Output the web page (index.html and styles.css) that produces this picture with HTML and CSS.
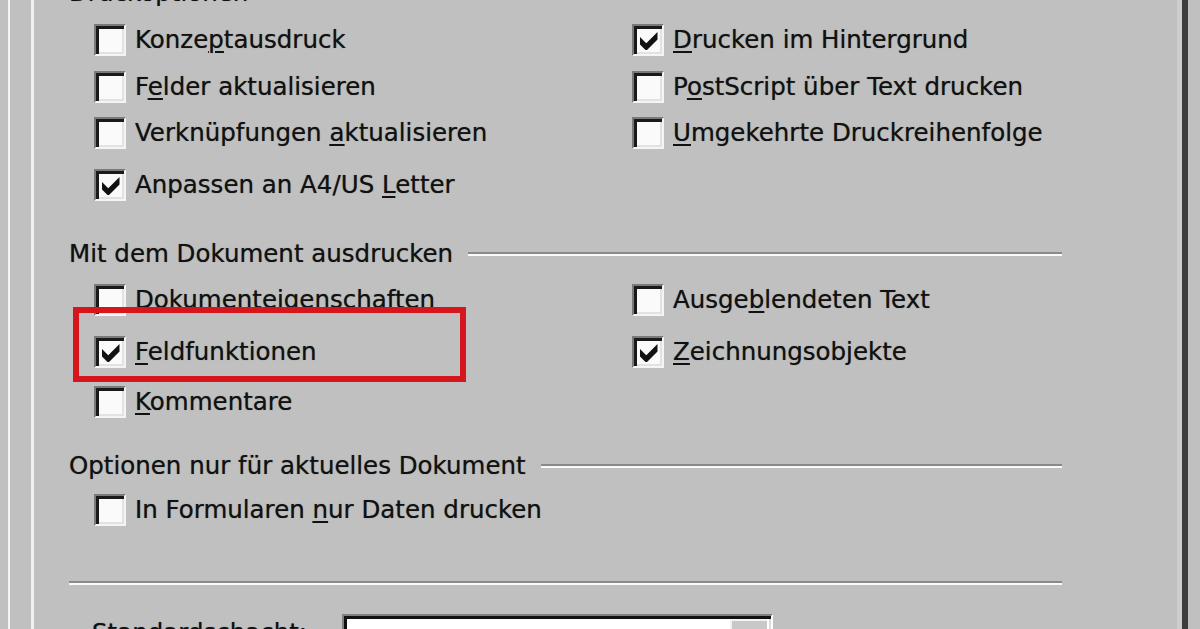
FILE: index.html
```html
<!DOCTYPE html>
<html lang="de">
<head>
<meta charset="utf-8">
<title>Drucken – Optionen</title>
<link rel="stylesheet" href="styles.css">
</head>
<body>
<div class="window">
  <div class="frame">
    <div class="page">
      <section class="group g1">
        <div class="legend"><span class="legend-text">Druckoptionen</span><span class="rule"></span></div>
        <div class="opts rows-1">
          <div class="opt"><span class="cb"></span><span class="txt">Konze<u>p</u>tausdruck</span></div>
          <div class="opt"><span class="cb"><svg class="tick" viewBox="0 0 7 7.5"><polygon points="0,2 2.5,4.5 7,0 7,3 2.5,7.5 0,5"/></svg></span><span class="txt"><u>D</u>rucken im Hintergrund</span></div>
          <div class="opt"><span class="cb"></span><span class="txt">F<u>e</u>lder aktualisieren</span></div>
          <div class="opt"><span class="cb"></span><span class="txt">P<u>o</u>stScript über Text drucken</span></div>
          <div class="opt"><span class="cb"></span><span class="txt">Verknüpfungen <u>a</u>ktualisieren</span></div>
          <div class="opt"><span class="cb"></span><span class="txt"><u>U</u>mgekehrte Druckreihenfolge</span></div>
          <div class="opt"><span class="cb"><svg class="tick" viewBox="0 0 7 7.5"><polygon points="0,2 2.5,4.5 7,0 7,3 2.5,7.5 0,5"/></svg></span><span class="txt">Anpassen an A4/US <u>L</u>etter</span></div>
        </div>
      </section>

      <section class="group g2">
        <div class="legend"><span class="legend-text">Mit dem Dokument ausdrucken</span><span class="rule"></span></div>
        <div class="opts rows-2">
          <div class="opt"><span class="cb"></span><span class="txt">Dok<u>u</u>menteigenschaften</span></div>
          <div class="opt"><span class="cb"></span><span class="txt">Ausge<u>b</u>lendeten Text</span></div>
          <div class="opt"><span class="cb"><svg class="tick" viewBox="0 0 7 7.5"><polygon points="0,2 2.5,4.5 7,0 7,3 2.5,7.5 0,5"/></svg></span><span class="txt"><u>F</u>eldfunktionen</span></div>
          <div class="opt"><span class="cb"><svg class="tick" viewBox="0 0 7 7.5"><polygon points="0,2 2.5,4.5 7,0 7,3 2.5,7.5 0,5"/></svg></span><span class="txt"><u>Z</u>eichnungsobjekte</span></div>
          <div class="opt"><span class="cb"></span><span class="txt"><u>K</u>ommentare</span></div>
        </div>
      </section>

      <section class="group g3">
        <div class="legend"><span class="legend-text">Optionen nur für aktuelles Dokument</span><span class="rule"></span></div>
        <div class="opts rows-3">
          <div class="opt"><span class="cb"></span><span class="txt">In Formularen <u>n</u>ur Daten drucken</span></div>
        </div>
      </section>

      <div class="separator"></div>

      <div class="tray-row">
        <span class="tray-label">Standardschacht:</span>
        <div class="combo"><span class="combo-btn"></span></div>
      </div>

      <div class="highlight"></div>
    </div>
  </div>
</div>
</body>
</html>
```

FILE: styles.css
```css
* { box-sizing: border-box; }

html, body {
  margin: 0;
  padding: 0;
}

body {
  width: 1200px;
  height: 629px;
  overflow: hidden;
  background: #c0c0c0;
  font-family: "DejaVu Sans", Verdana, sans-serif;
  font-size: 24.5px;
  color: #111;
  text-shadow: 0 0 0.8px rgba(0, 0, 0, 0.55);
}

.window {
  height: 629px;
  padding-left: 8px;
}

.frame {
  height: 100%;
  border-left: 2px solid #f4f4f4;
  padding-left: 21px;
}

.page {
  position: relative;
  width: 1157px;
  height: 100%;
  border-left: 3px solid #f0f0f0;
  border-right: 6px solid #3d3d3d;
  box-shadow: inset -5px 0 0 #cdcdcd;
  padding: 0 120px 0 35px;
  overflow: hidden;
}

.legend {
  display: flex;
  align-items: center;
  height: 30px;
  line-height: 30px;
  white-space: nowrap;
}

.rule {
  flex: 1;
  height: 4px;
  margin-left: 15px;
  border-top: 2px solid #8a8a8a;
  border-bottom: 2px solid #fafafa;
}

.g1 { margin-top: -22px; }
.g2 { margin-top: 38px; }
.g3 { margin-top: 33px; }

.opts {
  display: grid;
  grid-template-columns: 538px 1fr;
  padding-left: 25px;
}

.rows-1 { margin-top: 16px; grid-template-rows: 47px 46px 52px 32px; }
.rows-2 { margin-top: 15px; grid-template-rows: 52px 50px 32px; }
.rows-3 { margin-top: 13px; grid-template-rows: 32px; }

.opt {
  display: flex;
  align-items: flex-start;
  height: 32px;
  line-height: 32px;
  white-space: nowrap;
}

.cb {
  flex: none;
  width: 32px;
  height: 32px;
  margin-right: 9px;
  padding: 2px 0 0 2px;
  background: #fafafa;
  border-style: solid;
  border-width: 2px;
  border-color: #7a7a7a #f4f4f4 #f4f4f4 #7a7a7a;
  box-shadow: inset 3px 3px 0 #1a1a1a, inset -2px -2px 0 #e2e2e2;
  display: flex;
  align-items: center;
  justify-content: center;
}

.tick {
  width: 17.5px;
  height: 18.75px;
  fill: #111;
}

.txt u {
  text-decoration-thickness: 2px;
  text-underline-offset: 3px;
}

.separator {
  margin-top: 55px;
  height: 4px;
  border-top: 2px solid #8a8a8a;
  border-bottom: 2px solid #fafafa;
}

.tray-row {
  display: flex;
  align-items: flex-start;
  margin-top: 29px;
}

.tray-label {
  width: 250px;
  margin-left: 23px;
  margin-top: 3px;
  line-height: 32px;
  white-space: nowrap;
}

.combo {
  width: 431px;
  height: 52px;
  background: #fff;
  border-style: solid;
  border-width: 2px;
  border-color: #808080 #ffffff #ffffff #808080;
  box-shadow: inset 3px 3px 0 #111, inset -2px -2px 0 #dcdcdc;
  display: flex;
  justify-content: flex-end;
  padding: 3px 4px 0 0;
}

.combo-btn {
  width: 37px;
  height: 44px;
  background: #c8c8c8;
  border-top: 2px solid #f2f2f2;
  border-left: 2px solid #f2f2f2;
}

.highlight {
  position: absolute;
  left: 39px;
  top: 307px;
  width: 393px;
  height: 75px;
  border: 6px solid #d5161c;
}
```
